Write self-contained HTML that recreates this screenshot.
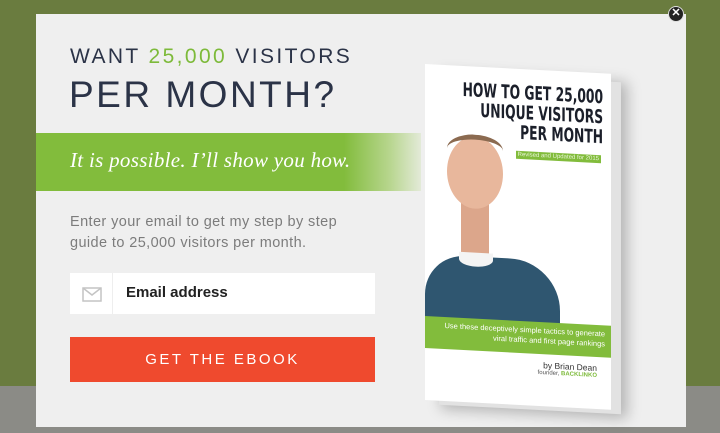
<!DOCTYPE html>
<html><head><style>
*{margin:0;padding:0;box-sizing:border-box}
body{width:720px;height:433px;overflow:hidden;position:relative;background:#6a7c3f;font-family:"Liberation Sans",sans-serif}
.bot{position:absolute;left:0;top:386px;width:720px;height:47px;background:#8b8b86}
.modal{position:absolute;left:36px;top:14px;width:650px;height:413px;background:#efefef}
.h1{position:absolute;left:34px;top:31px;font-size:21px;letter-spacing:2.4px;color:#2b3347}
.h1 span{color:#7dba3a}
.h2{position:absolute;left:33px;top:60px;font-size:37px;letter-spacing:2.5px;color:#2b3347}
.band{position:absolute;left:0;top:119px;width:385px;height:58px;background:linear-gradient(90deg,#82bc3c 0,#82bc3c 80%,#b8d68f 92%,#e3ead8 100%)}
.band div{position:absolute;left:34px;top:15px;font-family:"Liberation Serif",serif;font-style:italic;font-size:21px;color:#fff;letter-spacing:.3px}
.p{position:absolute;left:34px;top:198px;font-size:14.5px;line-height:21px;color:#7c7c7c;letter-spacing:.4px}
.inp{position:absolute;left:34px;top:259px;width:305px;height:41px;background:#fff}
.inp .ic{position:absolute;left:0;top:0;width:43px;height:41px;border-right:1px solid #eee}
.inp .t{position:absolute;left:56px;top:11px;font-size:15px;font-weight:bold;color:#222}
.btn{position:absolute;left:34px;top:323px;width:305px;height:45px;background:#ef4a2e;color:#fff;font-size:15px;letter-spacing:2.5px;text-align:center;line-height:45px}
.close{position:absolute;left:668px;top:6px;width:16px;height:16px;border-radius:50%;background:#222;border:1.5px solid #ddd;color:#fff;font-size:11px;line-height:13px;text-align:center;font-weight:bold}
.book{position:absolute;left:425px;top:64px;width:186px;height:336px;background:#fff;transform:skewY(3deg);transform-origin:left top;box-shadow:12px 6px 0 -2px #e2e2e2,16px 8px 14px rgba(0,0,0,.25);overflow:hidden}
.bt{position:absolute;right:8px;top:14px;white-space:nowrap;text-align:right;font-family:"DejaVu Sans Condensed","Liberation Sans",sans-serif;font-weight:bold;font-size:19px;line-height:20px;color:#1b1f2a;transform:scaleX(.72);transform-origin:right}
.tag{position:absolute;right:10px;top:82px;background:#82bc3c;color:#e9f5d9;font-size:6px;padding:1px 2px;white-space:nowrap}
.shirt{position:absolute;left:0;top:190px;width:135px;height:70px;background:#2f5670;border-radius:40px 50px 0 0}
.head{position:absolute;left:22px;top:70px;width:56px;height:72px;background:#e8b79c;border-radius:50%}
.hair{position:absolute;left:22px;top:68px;width:56px;height:30px;border-radius:50% 50% 0 0;border-top:5px solid #8b6a50}
.neck{position:absolute;left:36px;top:135px;width:28px;height:60px;background:#dca68b}
.tee{position:absolute;left:34px;top:186px;width:34px;height:14px;background:#f4f4f4;border-radius:0 0 50% 50%}
.gb{position:absolute;left:0;top:252px;width:186px;height:32px;background:#82bc3c;color:#fff;font-size:7.5px;padding:4px 6px;text-align:right;line-height:10px}
.by{position:absolute;right:14px;top:290px;font-size:8.5px;color:#333;text-align:right}
.by small{display:block;font-size:6px;color:#555}.by small b{color:#7dba3a}
</style></head><body>
<div class="bot"></div>
<div class="modal">
<div class="h1">WANT <span>25,000</span> VISITORS</div>
<div class="h2">PER MONTH?</div>
<div class="band"><div>It is possible. I’ll show you how.</div></div>
<div class="p">Enter your email to get my step by step<br>guide to 25,000 visitors per month.</div>
<div class="inp"><div class="ic"><svg width="43" height="41"><rect x="13" y="15" width="18" height="13" fill="none" stroke="#c4c4c4" stroke-width="1.5"/><path d="M13 15 L22 22 L31 15" fill="none" stroke="#c4c4c4" stroke-width="1.5"/></svg></div><div class="t">Email address</div></div>
<div class="btn">GET THE EBOOK</div>
</div>
<div class="book">
<div class="bt">HOW TO GET 25,000<br>UNIQUE VISITORS<br>PER MONTH</div>
<div class="tag">Revised and Updated for 2015</div>
<div class="shirt"></div><div class="neck"></div><div class="tee"></div><div class="head"></div><div class="hair"></div>
<div class="gb">Use these deceptively simple tactics to generate<br>viral traffic and first page rankings</div>
<div class="by">by Brian Dean<small>founder, <b>BACKLINKO</b></small></div>
</div>
<div class="close">✕</div>
</body></html>
